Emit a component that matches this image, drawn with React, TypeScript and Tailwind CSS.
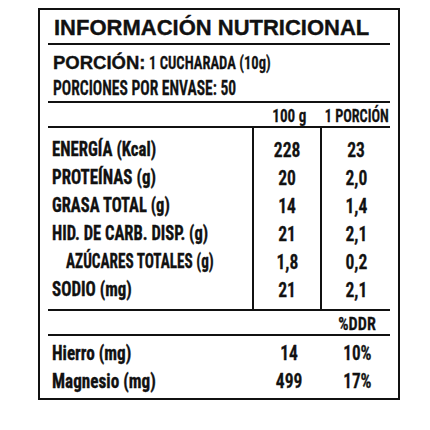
const rows = [
  { label: 'ENERGÍA (Kcal)', a: '228', b: '23', sq: 'scale-x-[0.86]' },
  { label: 'PROTEÍNAS (g)', a: '20', b: '2,0', sq: 'scale-x-[0.87]' },
  { label: 'GRASA TOTAL (g)', a: '14', b: '1,4', sq: 'scale-x-[0.85]' },
  { label: 'HID. DE CARB. DISP. (g)', a: '21', b: '2,1', sq: 'scale-x-[0.85]' },
  { label: 'AZÚCARES TOTALES (g)', a: '1,8', b: '0,2', sq: 'scale-x-[0.78]', indent: true },
  { label: 'SODIO (mg)', a: '21', b: '2,1', sq: 'scale-x-[0.87]' },
];

const minerals = [
  { label: 'Hierro (mg)', a: '14', b: '10%' },
  { label: 'Magnesio (mg)', a: '499', b: '17%' },
];

function Sq({ children, className = '' }: { children: React.ReactNode; className?: string }) {
  return <span className={`inline-block whitespace-nowrap shrink-0 ${className}`}>{children}</span>;
}

export default function App() {
  return (
    <div className="w-[430px] h-[430px] bg-white text-[#111] pt-[8px] pl-[38px] font-['Roboto_Condensed','Open_Sans_Condensed',sans-serif] [-webkit-text-stroke:0.35px_#111]">
      <div className="w-[362px] h-[392px] border-2 border-[#111] px-[8px] flex flex-col">
        {/* Title */}
        <div className="h-[35px] border-b-2 border-[#111] flex items-center pl-[6px]">
          <span className="text-[22px] font-bold leading-none mt-[2px] font-['Liberation_Sans',Arial,sans-serif]">
            INFORMACIÓN NUTRICIONAL
          </span>
        </div>

        {/* Porcion */}
        <div className="h-[58px] border-b-2 border-[#111] pl-[5px] pt-[9px] leading-none">
          <div className="flex items-baseline gap-[3px]">
            <span className="text-[18.5px] font-bold font-['Liberation_Sans',Arial,sans-serif]">PORCIÓN:</span>
            <Sq className="text-[18.5px] font-semibold origin-left scale-x-[0.79]">1 CUCHARADA (10g)</Sq>
          </div>
          <div className="mt-[5px]">
            <Sq className="text-[20px] font-semibold origin-left scale-x-[0.78]">PORCIONES POR ENVASE: 50</Sq>
          </div>
        </div>

        {/* Header */}
        <div className="h-[25px] border-b-2 border-[#111] grid grid-cols-[206px_70px_minmax(0,1fr)] items-center leading-none font-semibold text-[19px] pt-[2px]">
          <span />
          <span className="flex justify-center min-w-0">
            <Sq className="scale-x-[0.8]">100 g</Sq>
          </span>
          <span className="flex justify-center min-w-0">
            <Sq className="scale-x-[0.75]">1 PORCIÓN</Sq>
          </span>
        </div>

        {/* Data */}
        <div className="h-[183px] border-b-2 border-[#111] grid grid-cols-[204px_70px_minmax(0,1fr)] text-[19.5px] leading-none">
          <div className="pt-[8px] flex flex-col font-bold">
            {rows.map((r) => (
              <div key={r.label} className={`h-[28px] flex items-center ${r.indent ? 'pl-[18px]' : 'pl-[4px]'}`}>
                <Sq className={`origin-left ${r.sq}`}>{r.label}</Sq>
              </div>
            ))}
          </div>
          <div className="border-x-2 border-[#111] pt-[8px] flex flex-col font-semibold text-[20px]">
            {rows.map((r) => (
              <div key={r.label} className="h-[28px] flex items-center justify-center">
                <Sq className="scale-x-[0.88]">{r.a}</Sq>
              </div>
            ))}
          </div>
          <div className="pt-[8px] flex flex-col font-semibold text-[20px]">
            {rows.map((r) => (
              <div key={r.label} className="h-[28px] flex items-center justify-center">
                <Sq className="scale-x-[0.88]">{r.b}</Sq>
              </div>
            ))}
          </div>
        </div>

        {/* %DDR */}
        <div className="h-[25px] border-b-2 border-[#111] grid grid-cols-[206px_70px_minmax(0,1fr)] items-center leading-none font-semibold text-[19px] pt-[2px]">
          <span />
          <span />
          <span className="flex justify-center min-w-0">
            <Sq className="scale-x-[0.85]">%DDR</Sq>
          </span>
        </div>

        {/* Minerals */}
        <div className="pt-[3px] font-bold text-[20px] leading-none">
          {minerals.map((m) => (
            <div key={m.label} className="h-[28px] grid grid-cols-[206px_70px_minmax(0,1fr)] items-center">
              <span className="pl-[4px]">
                <Sq className="origin-left scale-x-[0.86]">{m.label}</Sq>
              </span>
              <span className="flex justify-center font-semibold">
                <Sq className="scale-x-[0.88]">{m.a}</Sq>
              </span>
              <span className="flex justify-center font-semibold min-w-0">
                <Sq className="scale-x-[0.86]">{m.b}</Sq>
              </span>
            </div>
          ))}
        </div>
      </div>
    </div>
  );
}
